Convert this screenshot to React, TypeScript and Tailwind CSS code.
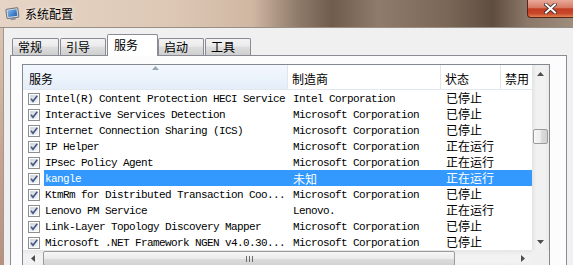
import React from "react";

interface Row {
  name: string;
  maker: string;
  status: string;
  selected?: boolean;
}

const rows: Row[] = [
  { name: "Intel(R) Content Protection HECI Service", maker: "Intel Corporation", status: "已停止" },
  { name: "Interactive Services Detection", maker: "Microsoft Corporation", status: "已停止" },
  { name: "Internet Connection Sharing (ICS)", maker: "Microsoft Corporation", status: "已停止" },
  { name: "IP Helper", maker: "Microsoft Corporation", status: "正在运行" },
  { name: "IPsec Policy Agent", maker: "Microsoft Corporation", status: "正在运行" },
  { name: "kangle", maker: "未知", status: "正在运行", selected: true },
  { name: "KtmRm for Distributed Transaction Coo...", maker: "Microsoft Corporation", status: "已停止" },
  { name: "Lenovo PM Service", maker: "Lenovo.", status: "正在运行" },
  { name: "Link-Layer Topology Discovery Mapper", maker: "Microsoft Corporation", status: "已停止" },
  { name: "Microsoft .NET Framework NGEN v4.0.30...", maker: "Microsoft Corporation", status: "已停止" },
];

const tabs = [
  { label: "常规", w: "w-[47px]" },
  { label: "引导", w: "w-[46px]" },
  { label: "服务", w: "w-[51px]", selected: true },
  { label: "启动", w: "w-[46px]" },
  { label: "工具", w: "w-[46px]" },
];

const cjk = "font-['Noto_Sans_CJK_SC',sans-serif]";
const mono = "font-['Liberation_Mono','Noto_Sans_CJK_SC',monospace] text-[11px] tracking-[-0.6px]";

function AppIcon() {
  return (
    <svg width="15" height="14" viewBox="0 0 15 14">
      <defs>
        <linearGradient id="scr" x1="0" y1="0" x2="1" y2="1">
          <stop offset="0" stopColor="#7fb6ea" />
          <stop offset="1" stopColor="#1f5fb0" />
        </linearGradient>
      </defs>
      <g transform="rotate(-8 7 7)">
        <rect x="1.5" y="1.5" width="12" height="9.5" rx="1" fill="#d9dde3" stroke="#6b7078" />
        <rect x="3" y="3" width="9" height="6.5" fill="url(#scr)" />
        <rect x="5" y="11" width="5" height="2" fill="#8a9098" />
      </g>
    </svg>
  );
}

function CheckBox() {
  return (
    <svg width="12" height="12" viewBox="0 0 12 12">
      <defs>
        <linearGradient id="cbg" x1="0" y1="0" x2="1" y2="1">
          <stop offset="0" stopColor="#cfd6e0" />
          <stop offset="1" stopColor="#f4f6f9" />
        </linearGradient>
      </defs>
      <rect x="0.5" y="0.5" width="11" height="11" fill="#fff" stroke="#8e8f8f" />
      <rect x="2" y="2" width="8" height="8" fill="url(#cbg)" />
      <path d="M3 5.8 L5 8.3 L9.2 2.8" fill="none" stroke="#4a5c86" strokeWidth="1.7" />
    </svg>
  );
}

export default function App() {
  return (
    <div className="flex h-[265px] w-[573px] flex-col overflow-hidden bg-[#f0f0f0]">
      {/* Title bar */}
      <div className="flex h-[28px] shrink-0 items-start justify-between border-b border-[#9a8f86] bg-[linear-gradient(90deg,#e6d5c6_0%,#ddc8b5_30%,#cfb7a2_44%,#8f7b6a_52%,#6f5c4c_58%,#8e7b6b_66%,#7a6757_78%,#5f4d40_86%,#8b7868_92%,#9e8c7c_100%)]">
        <div className="flex items-center pl-[5px] pt-[7px]">
          <AppIcon />
          <span className={`${cjk} ml-[5px] text-[12px] leading-[14px] text-black [text-shadow:0_0_6px_rgba(255,255,255,0.9)]`}>
            系统配置
          </span>
        </div>
        <div className="flex h-[18px] w-[46px] items-center justify-center rounded-bl-[4px] border border-t-0 border-r-0 border-[#5a2418] bg-[linear-gradient(180deg,#e9a99a_0%,#d77a64_45%,#c23c22_52%,#c9482c_80%,#e0844f_100%)]">
          <svg width="13" height="11" viewBox="0 0 13 11">
            <path d="M2 1.5 L11 9.5 M11 1.5 L2 9.5" stroke="#3b2a26" strokeWidth="3.6" strokeLinecap="square" />
            <path d="M2 1.5 L11 9.5 M11 1.5 L2 9.5" stroke="#ffffff" strokeWidth="2" strokeLinecap="square" />
          </svg>
        </div>
      </div>

      <div className="flex flex-1">
        {/* Left frame */}
        <div className="w-[4px] shrink-0 border-r border-[#9a9a9a] bg-[linear-gradient(180deg,#dcc4af,#c9a58e_50%,#b98f78)]" />

        {/* Client area */}
        <div className="flex flex-1 flex-col pl-[6px] pt-[6px]">
          {/* Tabs */}
          <div className="flex h-[21px] items-end pl-[2px]">
            {tabs.map((t) =>
              t.selected ? (
                <div
                  key={t.label}
                  className={`${t.w} ${cjk} relative z-10 -mb-px h-[22px] rounded-t-[2px] border border-b-0 border-[#898c95] bg-white pl-[6px] pt-[1px] text-[12px] leading-[18px] text-black`}
                >
                  {t.label}
                </div>
              ) : (
                <div
                  key={t.label}
                  className={`${t.w} ${cjk} mr-px h-[17px] rounded-t-[2px] border border-b-0 border-[#898c95] bg-[linear-gradient(180deg,#f3f3f3_0%,#ebebeb_45%,#dddddd_50%,#cfcfcf_100%)] pl-[5px] text-[12px] leading-[16px] text-black`}
                >
                  {t.label}
                </div>
              )
            )}
          </div>

          {/* Tab panel */}
          <div className="flex w-[557px] flex-1 border border-[#898c95] bg-[#fcfcfc] pl-[11px] pt-[8px]">
            {/* List view */}
            <div className="flex h-[205px] w-[528px] border border-[#828790] bg-white">
              <div className="flex w-[509px] flex-col">
                {/* Header */}
                <div className={`${cjk} flex h-[25px] shrink-0 border-b border-[#e3e8ef] text-[12px] text-black`}>
                  <div className="relative flex w-[265px] items-center border-r border-[#dfe6ee] bg-[linear-gradient(180deg,#f3f8fd,#e4eef9)] pl-[6px] pt-[3px]">
                    服务
                    <svg className="absolute left-[129px] top-[1px]" width="7" height="4" viewBox="0 0 7 4">
                      <path d="M0 4 L3.5 0 L7 4 Z" fill="#97a4b4" />
                    </svg>
                  </div>
                  <div className="flex w-[153px] items-center border-r border-[#e5e5e5] pl-[4px] pt-[3px]">制造商</div>
                  <div className="flex w-[60px] items-center border-r border-[#e5e5e5] pl-[4px] pt-[3px]">状态</div>
                  <div className="flex flex-1 items-center overflow-hidden whitespace-nowrap pl-[4px] pt-[3px]">禁用</div>
                </div>

                {/* Rows */}
                <div className="flex flex-col">
                  {rows.map((r) => (
                    <div key={r.name} className="flex h-[16px]">
                      <div className="w-[21px] shrink-0 pl-[5px] pt-[3px]">
                        <CheckBox />
                      </div>
                      <div className={`flex flex-1 whitespace-nowrap leading-[16px] ${r.selected ? "bg-[#3399ff] text-white" : "text-black"}`}>
                        <div className={`${mono} w-[244px] overflow-hidden pl-[1px] pt-[1px]`}>{r.name}</div>
                        <div className={`${mono} w-[153px] overflow-hidden pl-[5px] pt-[1px]`}>
                          {r.maker === "未知" ? <span className={`${cjk} text-[12px] tracking-normal`}>{r.maker}</span> : r.maker}
                        </div>
                        <div className={`${cjk} w-[60px] pl-[5px] text-[12px]`}>{r.status}</div>
                        <div className="flex-1" />
                      </div>
                    </div>
                  ))}
                </div>

                {/* Horizontal scrollbar */}
                <div className="flex h-[17px] shrink-0 items-center bg-[linear-gradient(180deg,#e6e6e6,#f2f2f2_30%,#f2f2f2_70%,#eaeaea)]">
                  <div className="flex w-[20px] items-center justify-center">
                    <svg width="4" height="7" viewBox="0 0 4 7">
                      <path d="M4 0 L0 3.5 L4 7 Z" fill="#4d4d4d" />
                    </svg>
                  </div>
                  <div className="flex h-[15px] w-[412px] items-center justify-center rounded-[2px] border border-[#9b9b9b] bg-[linear-gradient(180deg,#f7f7f7,#ececec_50%,#dcdcdc_55%,#d2d2d2)]">
                    <svg width="7" height="6" viewBox="0 0 7 6">
                      <path d="M0.5 0 V6 M3.5 0 V6 M6.5 0 V6" stroke="#6b6b6b" strokeWidth="1" />
                    </svg>
                  </div>
                  <div className="flex flex-1 items-center justify-end pr-[7px]">
                    <svg width="4" height="7" viewBox="0 0 4 7">
                      <path d="M0 0 L4 3.5 L0 7 Z" fill="#4d4d4d" />
                    </svg>
                  </div>
                </div>
              </div>

              {/* Vertical scrollbar */}
              <div className="flex w-[17px] flex-col">
                <div className="flex h-[185px] flex-col bg-[linear-gradient(90deg,#e3e3e3,#f1f1f1_25%,#f1f1f1_75%,#e9e9e9)]">
                  <div className="flex h-[17px] items-center justify-center">
                    <svg width="7" height="4" viewBox="0 0 7 4">
                      <path d="M0 4 L3.5 0 L7 4 Z" fill="#4d4d4d" />
                    </svg>
                  </div>
                  <div className="h-[47px]" />
                  <div className="mx-px h-[15px] rounded-[2px] border border-[#9b9b9b] bg-[linear-gradient(90deg,#f7f7f7,#ececec_50%,#dcdcdc_55%,#d2d2d2)]" />
                  <div className="flex-1" />
                  <div className="flex h-[17px] items-center justify-center">
                    <svg width="7" height="4" viewBox="0 0 7 4">
                      <path d="M0 0 L7 0 L3.5 4 Z" fill="#4d4d4d" />
                    </svg>
                  </div>
                </div>
                <div className="flex-1 bg-[#f0f0f0]" />
              </div>
            </div>
          </div>
        </div>
      </div>
    </div>
  );
}
